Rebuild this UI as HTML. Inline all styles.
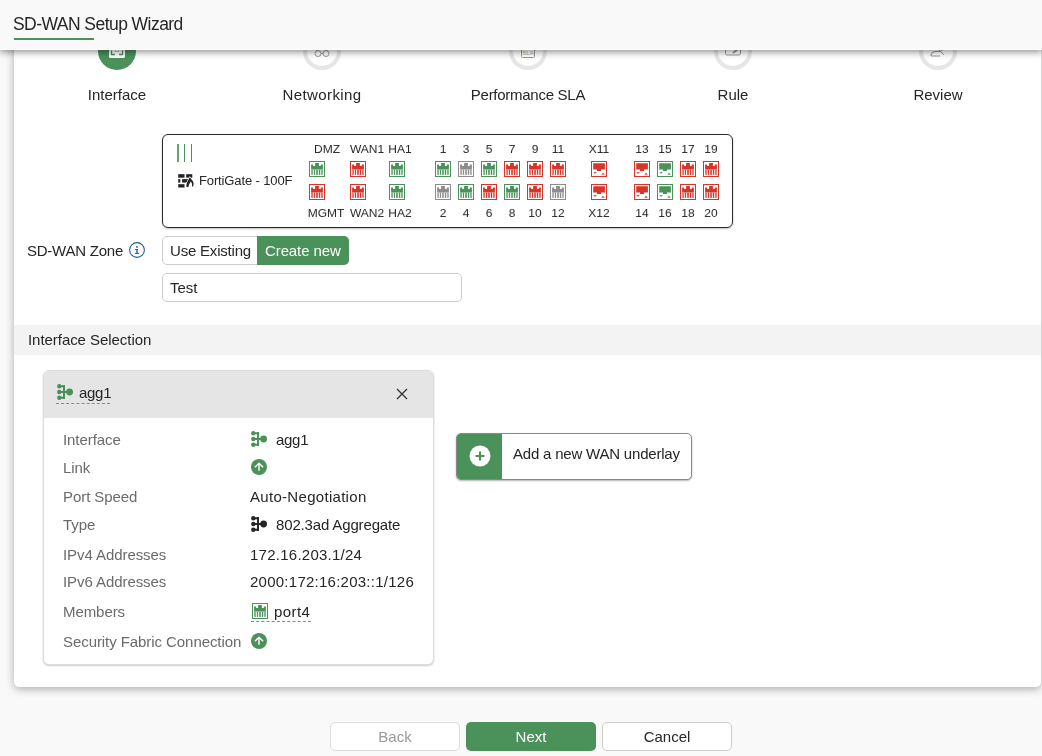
<!DOCTYPE html>
<html><head><meta charset="utf-8"><style>
html,body{margin:0;padding:0}
body{width:1042px;height:756px;overflow:hidden;position:relative;background:#f9f9f9;font-family:"Liberation Sans",sans-serif;color:#333}
.t{position:absolute;line-height:20px;white-space:nowrap;will-change:transform}
.p{position:absolute;display:block}
.abs{position:absolute}
</style></head><body>

<div class="abs" style="left:14px;top:-10px;width:1027px;height:697px;background:#fff;border-radius:5px;box-shadow:0 2px 8px rgba(0,0,0,0.32)"></div>
<div class="abs" style="left:98px;top:32px;width:38px;height:38px;border-radius:50%;background:#4a915a"></div>
<svg class="p" style="left:109px;top:42px" width="16" height="16" viewBox="0 0 16 16"><rect x="0" y="0" width="16" height="16" rx="1.5" fill="#fff"/><path d="M2.5 8.5V12.5H6M10 12.5H13.5V8.5" fill="none" stroke="#4a915a" stroke-width="1.3"/><path d="M6 9H7V10M9 10V9H10" stroke="#4a915a" stroke-width="1" fill="none" opacity="0.6"/></svg>
<div class="t" style="left:17px;width:200px;text-align:center;top:85px;font-size:15px;color:#262626;letter-spacing:0px">Interface</div>
<div class="abs" style="left:303px;top:32px;width:30px;height:30px;border-radius:50%;border:4px solid #e6e6e6"></div>
<svg class="p" style="left:314px;top:47px" width="16" height="12" viewBox="0 0 16 12"><g fill="none" stroke="#999" stroke-width="1"><circle cx="4" cy="6.5" r="3"/><circle cx="12" cy="6.5" r="3"/><path d="M7 6.5H9M2.5 3.8L3.5 1.5M13.5 3.8L12.5 1.5"/></g></svg>
<div class="t" style="left:222px;width:200px;text-align:center;top:85px;font-size:15px;color:#262626;letter-spacing:0.4px">Networking</div>
<div class="abs" style="left:509px;top:32px;width:30px;height:30px;border-radius:50%;border:4px solid #e6e6e6"></div>
<svg class="p" style="left:521px;top:44px" width="14" height="14" viewBox="0 0 14 14"><rect x="0.5" y="0.5" width="13" height="13" rx="1" fill="none" stroke="#9a9a9a"/><text x="7" y="11" font-size="6" text-anchor="middle" fill="#aaa" font-family="Liberation Sans">SLA</text></svg>
<div class="t" style="left:428px;width:200px;text-align:center;top:85px;font-size:15px;color:#262626;letter-spacing:-0.27px">Performance SLA</div>
<div class="abs" style="left:714px;top:32px;width:30px;height:30px;border-radius:50%;border:4px solid #e6e6e6"></div>
<svg class="p" style="left:725px;top:42px" width="16" height="14" viewBox="0 0 16 14"><rect x="0.5" y="0.5" width="15" height="12.5" rx="1.5" fill="none" stroke="#999"/><path d="M8 11L13 7" stroke="#999" stroke-width="2"/></svg>
<div class="t" style="left:633px;width:200px;text-align:center;top:85px;font-size:15px;color:#262626;letter-spacing:0px">Rule</div>
<div class="abs" style="left:919px;top:32px;width:30px;height:30px;border-radius:50%;border:4px solid #e6e6e6"></div>
<svg class="p" style="left:930px;top:44px" width="16" height="14" viewBox="0 0 16 14"><path d="M1 12C1 9 3 7.5 6 7.5H10M1 12H10" fill="none" stroke="#999" stroke-width="1.2"/><path d="M8 4L10 7L14 11M11 7.5L14 4" fill="none" stroke="#999" stroke-width="1"/></svg>
<div class="t" style="left:838px;width:200px;text-align:center;top:85px;font-size:15px;color:#262626;letter-spacing:0px">Review</div>
<div class="abs" style="left:0;top:0;width:1042px;height:49px;border-bottom:1px solid #fff;background:#f9f9f9;box-shadow:0 2px 7px rgba(0,0,0,0.45)"></div>
<div class="t" style="left:13px;top:14px;font-size:17.5px;color:#262626;letter-spacing:-0.55px;">SD-WAN Setup Wizard</div>
<div class="abs" style="left:14px;top:38px;width:80px;height:2px;background:#4a915a"></div>
<div class="abs" style="left:162px;top:134px;width:569px;height:92px;border:1px solid #2a2a2a;border-radius:6px;box-shadow:0 1px 2px rgba(0,0,0,0.25)"></div>
<div class="abs" style="left:177px;top:144px;width:2px;height:18px;background:#4a915a;opacity:0.85"></div>
<div class="abs" style="left:184px;top:144px;width:1.2px;height:18px;background:#4a915a"></div>
<div class="abs" style="left:190.9px;top:144px;width:1.2px;height:18px;background:#4a915a"></div>
<svg class="p" style="left:178px;top:174px" width="17" height="14" viewBox="0 0 17 14">
<g fill="#222"><rect x="0.2" y="0.2" width="6.3" height="3.5"/><rect x="8.2" y="0.2" width="6.1" height="3.5"/>
<rect x="0.2" y="5.1" width="2.1" height="3.5"/><rect x="4.1" y="5.1" width="6.4" height="3.5"/>
<rect x="0.2" y="10.2" width="6.3" height="3.3"/></g>
<path d="M8.4 13C8 10.5 9.8 6.5 11.8 3.3C13 5.2 15.8 7.2 15.6 10C15.5 11.3 15 12.2 14.5 12.7L13.9 12.3C14.5 10.8 13.8 9 12.7 7.6C11.6 9.5 10.6 11.5 10.4 13Z" fill="#222" stroke="#fff" stroke-width="1.4" paint-order="stroke"/>
</svg>
<div class="t" style="left:199px;top:171px;font-size:13px;color:#262626;letter-spacing:-0.13px;">FortiGate - 100F</div>
<div class="t" style="left:296.5px;width:60px;text-align:center;top:139px;font-size:12px;color:#262626;transform:scaleY(0.9);transform-origin:0 14px">DMZ</div>
<div class="t" style="left:336.5px;width:60px;text-align:center;top:139px;font-size:12px;color:#262626;transform:scaleY(0.9);transform-origin:0 14px">WAN1</div>
<div class="t" style="left:369.5px;width:60px;text-align:center;top:139px;font-size:12px;color:#262626;transform:scaleY(0.9);transform-origin:0 14px">HA1</div>
<div class="t" style="left:296px;width:60px;text-align:center;top:203px;font-size:12px;color:#262626;transform:scaleY(0.9);transform-origin:0 14px">MGMT</div>
<div class="t" style="left:336.5px;width:60px;text-align:center;top:203px;font-size:12px;color:#262626;transform:scaleY(0.9);transform-origin:0 14px">WAN2</div>
<div class="t" style="left:369.5px;width:60px;text-align:center;top:203px;font-size:12px;color:#262626;transform:scaleY(0.9);transform-origin:0 14px">HA2</div>
<svg class="p" style="left:309px;top:161px" width="16" height="16" viewBox="0 0 16 16"><rect x="0.5" y="0.5" width="15" height="15" fill="#fff" stroke="#4a915a"/><path d="M2.1 8.6V3.4H4.1V4.9H6.1V2.1H9.9V4.9H11.8V3.4H13.9V8.6Z" fill="#4a915a"/><g fill="#4a915a"><rect x="2.1" y="8.6" width="2" height="5.3" opacity="0.7"/><rect x="4.9" y="8.6" width="1.2" height="5.3"/><rect x="7" y="8.6" width="2.1" height="5.3" opacity="0.8"/><rect x="9.9" y="8.6" width="1.2" height="5.3"/><rect x="11.8" y="8.6" width="2.1" height="5.3" opacity="0.7"/></g></svg>
<svg class="p" style="left:350px;top:161px" width="16" height="16" viewBox="0 0 16 16"><rect x="0.5" y="0.5" width="15" height="15" fill="#fff" stroke="#d6352a"/><path d="M2.1 8.6V3.4H4.1V4.9H6.1V2.1H9.9V4.9H11.8V3.4H13.9V8.6Z" fill="#d6352a"/><g fill="#d6352a"><rect x="2.1" y="8.6" width="2" height="5.3" opacity="0.7"/><rect x="4.9" y="8.6" width="1.2" height="5.3"/><rect x="7" y="8.6" width="2.1" height="5.3" opacity="0.8"/><rect x="9.9" y="8.6" width="1.2" height="5.3"/><rect x="11.8" y="8.6" width="2.1" height="5.3" opacity="0.7"/></g></svg>
<svg class="p" style="left:389px;top:161px" width="16" height="16" viewBox="0 0 16 16"><rect x="0.5" y="0.5" width="15" height="15" fill="#fff" stroke="#4a915a"/><path d="M2.1 8.6V3.4H4.1V4.9H6.1V2.1H9.9V4.9H11.8V3.4H13.9V8.6Z" fill="#4a915a"/><g fill="#4a915a"><rect x="2.1" y="8.6" width="2" height="5.3" opacity="0.7"/><rect x="4.9" y="8.6" width="1.2" height="5.3"/><rect x="7" y="8.6" width="2.1" height="5.3" opacity="0.8"/><rect x="9.9" y="8.6" width="1.2" height="5.3"/><rect x="11.8" y="8.6" width="2.1" height="5.3" opacity="0.7"/></g></svg>
<svg class="p" style="left:309px;top:184px" width="16" height="16" viewBox="0 0 16 16"><rect x="0.5" y="0.5" width="15" height="15" fill="#fff" stroke="#d6352a"/><path d="M2.1 8.6V3.4H4.1V4.9H6.1V2.1H9.9V4.9H11.8V3.4H13.9V8.6Z" fill="#d6352a"/><g fill="#d6352a"><rect x="2.1" y="8.6" width="2" height="5.3" opacity="0.7"/><rect x="4.9" y="8.6" width="1.2" height="5.3"/><rect x="7" y="8.6" width="2.1" height="5.3" opacity="0.8"/><rect x="9.9" y="8.6" width="1.2" height="5.3"/><rect x="11.8" y="8.6" width="2.1" height="5.3" opacity="0.7"/></g></svg>
<svg class="p" style="left:350px;top:184px" width="16" height="16" viewBox="0 0 16 16"><rect x="0.5" y="0.5" width="15" height="15" fill="#fff" stroke="#d6352a"/><path d="M2.1 8.6V3.4H4.1V4.9H6.1V2.1H9.9V4.9H11.8V3.4H13.9V8.6Z" fill="#d6352a"/><g fill="#d6352a"><rect x="2.1" y="8.6" width="2" height="5.3" opacity="0.7"/><rect x="4.9" y="8.6" width="1.2" height="5.3"/><rect x="7" y="8.6" width="2.1" height="5.3" opacity="0.8"/><rect x="9.9" y="8.6" width="1.2" height="5.3"/><rect x="11.8" y="8.6" width="2.1" height="5.3" opacity="0.7"/></g></svg>
<svg class="p" style="left:389px;top:184px" width="16" height="16" viewBox="0 0 16 16"><rect x="0.5" y="0.5" width="15" height="15" fill="#fff" stroke="#4a915a"/><path d="M2.1 8.6V3.4H4.1V4.9H6.1V2.1H9.9V4.9H11.8V3.4H13.9V8.6Z" fill="#4a915a"/><g fill="#4a915a"><rect x="2.1" y="8.6" width="2" height="5.3" opacity="0.7"/><rect x="4.9" y="8.6" width="1.2" height="5.3"/><rect x="7" y="8.6" width="2.1" height="5.3" opacity="0.8"/><rect x="9.9" y="8.6" width="1.2" height="5.3"/><rect x="11.8" y="8.6" width="2.1" height="5.3" opacity="0.7"/></g></svg>
<svg class="p" style="left:435px;top:161px" width="16" height="16" viewBox="0 0 16 16"><rect x="0.5" y="0.5" width="15" height="15" fill="#fff" stroke="#4a915a"/><path d="M2.1 8.6V3.4H4.1V4.9H6.1V2.1H9.9V4.9H11.8V3.4H13.9V8.6Z" fill="#4a915a"/><g fill="#4a915a"><rect x="2.1" y="8.6" width="2" height="5.3" opacity="0.7"/><rect x="4.9" y="8.6" width="1.2" height="5.3"/><rect x="7" y="8.6" width="2.1" height="5.3" opacity="0.8"/><rect x="9.9" y="8.6" width="1.2" height="5.3"/><rect x="11.8" y="8.6" width="2.1" height="5.3" opacity="0.7"/></g></svg>
<svg class="p" style="left:435px;top:184px" width="16" height="16" viewBox="0 0 16 16"><rect x="0.5" y="0.5" width="15" height="15" fill="#fff" stroke="#8c8c8c"/><path d="M2.1 8.6V3.4H4.1V4.9H6.1V2.1H9.9V4.9H11.8V3.4H13.9V8.6Z" fill="#8c8c8c"/><g fill="#8c8c8c"><rect x="2.1" y="8.6" width="2" height="5.3" opacity="0.7"/><rect x="4.9" y="8.6" width="1.2" height="5.3"/><rect x="7" y="8.6" width="2.1" height="5.3" opacity="0.8"/><rect x="9.9" y="8.6" width="1.2" height="5.3"/><rect x="11.8" y="8.6" width="2.1" height="5.3" opacity="0.7"/></g></svg>
<div class="t" style="left:413px;width:60px;text-align:center;top:139px;font-size:12px;color:#262626;transform:scaleY(0.9);transform-origin:0 14px">1</div>
<div class="t" style="left:413px;width:60px;text-align:center;top:203px;font-size:12px;color:#262626;transform:scaleY(0.9);transform-origin:0 14px">2</div>
<svg class="p" style="left:458px;top:161px" width="16" height="16" viewBox="0 0 16 16"><rect x="0.5" y="0.5" width="15" height="15" fill="#fff" stroke="#8c8c8c"/><path d="M2.1 8.6V3.4H4.1V4.9H6.1V2.1H9.9V4.9H11.8V3.4H13.9V8.6Z" fill="#8c8c8c"/><g fill="#8c8c8c"><rect x="2.1" y="8.6" width="2" height="5.3" opacity="0.7"/><rect x="4.9" y="8.6" width="1.2" height="5.3"/><rect x="7" y="8.6" width="2.1" height="5.3" opacity="0.8"/><rect x="9.9" y="8.6" width="1.2" height="5.3"/><rect x="11.8" y="8.6" width="2.1" height="5.3" opacity="0.7"/></g></svg>
<svg class="p" style="left:458px;top:184px" width="16" height="16" viewBox="0 0 16 16"><rect x="0.5" y="0.5" width="15" height="15" fill="#fff" stroke="#4a915a"/><path d="M2.1 8.6V3.4H4.1V4.9H6.1V2.1H9.9V4.9H11.8V3.4H13.9V8.6Z" fill="#4a915a"/><g fill="#4a915a"><rect x="2.1" y="8.6" width="2" height="5.3" opacity="0.7"/><rect x="4.9" y="8.6" width="1.2" height="5.3"/><rect x="7" y="8.6" width="2.1" height="5.3" opacity="0.8"/><rect x="9.9" y="8.6" width="1.2" height="5.3"/><rect x="11.8" y="8.6" width="2.1" height="5.3" opacity="0.7"/></g></svg>
<div class="t" style="left:436px;width:60px;text-align:center;top:139px;font-size:12px;color:#262626;transform:scaleY(0.9);transform-origin:0 14px">3</div>
<div class="t" style="left:436px;width:60px;text-align:center;top:203px;font-size:12px;color:#262626;transform:scaleY(0.9);transform-origin:0 14px">4</div>
<svg class="p" style="left:481px;top:161px" width="16" height="16" viewBox="0 0 16 16"><rect x="0.5" y="0.5" width="15" height="15" fill="#fff" stroke="#4a915a"/><path d="M2.1 8.6V3.4H4.1V4.9H6.1V2.1H9.9V4.9H11.8V3.4H13.9V8.6Z" fill="#4a915a"/><g fill="#4a915a"><rect x="2.1" y="8.6" width="2" height="5.3" opacity="0.7"/><rect x="4.9" y="8.6" width="1.2" height="5.3"/><rect x="7" y="8.6" width="2.1" height="5.3" opacity="0.8"/><rect x="9.9" y="8.6" width="1.2" height="5.3"/><rect x="11.8" y="8.6" width="2.1" height="5.3" opacity="0.7"/></g></svg>
<svg class="p" style="left:481px;top:184px" width="16" height="16" viewBox="0 0 16 16"><rect x="0.5" y="0.5" width="15" height="15" fill="#fff" stroke="#d6352a"/><path d="M2.1 8.6V3.4H4.1V4.9H6.1V2.1H9.9V4.9H11.8V3.4H13.9V8.6Z" fill="#d6352a"/><g fill="#d6352a"><rect x="2.1" y="8.6" width="2" height="5.3" opacity="0.7"/><rect x="4.9" y="8.6" width="1.2" height="5.3"/><rect x="7" y="8.6" width="2.1" height="5.3" opacity="0.8"/><rect x="9.9" y="8.6" width="1.2" height="5.3"/><rect x="11.8" y="8.6" width="2.1" height="5.3" opacity="0.7"/></g></svg>
<div class="t" style="left:459px;width:60px;text-align:center;top:139px;font-size:12px;color:#262626;transform:scaleY(0.9);transform-origin:0 14px">5</div>
<div class="t" style="left:459px;width:60px;text-align:center;top:203px;font-size:12px;color:#262626;transform:scaleY(0.9);transform-origin:0 14px">6</div>
<svg class="p" style="left:504px;top:161px" width="16" height="16" viewBox="0 0 16 16"><rect x="0.5" y="0.5" width="15" height="15" fill="#fff" stroke="#d6352a"/><path d="M2.1 8.6V3.4H4.1V4.9H6.1V2.1H9.9V4.9H11.8V3.4H13.9V8.6Z" fill="#d6352a"/><g fill="#d6352a"><rect x="2.1" y="8.6" width="2" height="5.3" opacity="0.7"/><rect x="4.9" y="8.6" width="1.2" height="5.3"/><rect x="7" y="8.6" width="2.1" height="5.3" opacity="0.8"/><rect x="9.9" y="8.6" width="1.2" height="5.3"/><rect x="11.8" y="8.6" width="2.1" height="5.3" opacity="0.7"/></g></svg>
<svg class="p" style="left:504px;top:184px" width="16" height="16" viewBox="0 0 16 16"><rect x="0.5" y="0.5" width="15" height="15" fill="#fff" stroke="#4a915a"/><path d="M2.1 8.6V3.4H4.1V4.9H6.1V2.1H9.9V4.9H11.8V3.4H13.9V8.6Z" fill="#4a915a"/><g fill="#4a915a"><rect x="2.1" y="8.6" width="2" height="5.3" opacity="0.7"/><rect x="4.9" y="8.6" width="1.2" height="5.3"/><rect x="7" y="8.6" width="2.1" height="5.3" opacity="0.8"/><rect x="9.9" y="8.6" width="1.2" height="5.3"/><rect x="11.8" y="8.6" width="2.1" height="5.3" opacity="0.7"/></g></svg>
<div class="t" style="left:482px;width:60px;text-align:center;top:139px;font-size:12px;color:#262626;transform:scaleY(0.9);transform-origin:0 14px">7</div>
<div class="t" style="left:482px;width:60px;text-align:center;top:203px;font-size:12px;color:#262626;transform:scaleY(0.9);transform-origin:0 14px">8</div>
<svg class="p" style="left:527px;top:161px" width="16" height="16" viewBox="0 0 16 16"><rect x="0.5" y="0.5" width="15" height="15" fill="#fff" stroke="#d6352a"/><path d="M2.1 8.6V3.4H4.1V4.9H6.1V2.1H9.9V4.9H11.8V3.4H13.9V8.6Z" fill="#d6352a"/><g fill="#d6352a"><rect x="2.1" y="8.6" width="2" height="5.3" opacity="0.7"/><rect x="4.9" y="8.6" width="1.2" height="5.3"/><rect x="7" y="8.6" width="2.1" height="5.3" opacity="0.8"/><rect x="9.9" y="8.6" width="1.2" height="5.3"/><rect x="11.8" y="8.6" width="2.1" height="5.3" opacity="0.7"/></g></svg>
<svg class="p" style="left:527px;top:184px" width="16" height="16" viewBox="0 0 16 16"><rect x="0.5" y="0.5" width="15" height="15" fill="#fff" stroke="#d6352a"/><path d="M2.1 8.6V3.4H4.1V4.9H6.1V2.1H9.9V4.9H11.8V3.4H13.9V8.6Z" fill="#d6352a"/><g fill="#d6352a"><rect x="2.1" y="8.6" width="2" height="5.3" opacity="0.7"/><rect x="4.9" y="8.6" width="1.2" height="5.3"/><rect x="7" y="8.6" width="2.1" height="5.3" opacity="0.8"/><rect x="9.9" y="8.6" width="1.2" height="5.3"/><rect x="11.8" y="8.6" width="2.1" height="5.3" opacity="0.7"/></g></svg>
<div class="t" style="left:505px;width:60px;text-align:center;top:139px;font-size:12px;color:#262626;transform:scaleY(0.9);transform-origin:0 14px">9</div>
<div class="t" style="left:505px;width:60px;text-align:center;top:203px;font-size:12px;color:#262626;transform:scaleY(0.9);transform-origin:0 14px">10</div>
<svg class="p" style="left:550px;top:161px" width="16" height="16" viewBox="0 0 16 16"><rect x="0.5" y="0.5" width="15" height="15" fill="#fff" stroke="#d6352a"/><path d="M2.1 8.6V3.4H4.1V4.9H6.1V2.1H9.9V4.9H11.8V3.4H13.9V8.6Z" fill="#d6352a"/><g fill="#d6352a"><rect x="2.1" y="8.6" width="2" height="5.3" opacity="0.7"/><rect x="4.9" y="8.6" width="1.2" height="5.3"/><rect x="7" y="8.6" width="2.1" height="5.3" opacity="0.8"/><rect x="9.9" y="8.6" width="1.2" height="5.3"/><rect x="11.8" y="8.6" width="2.1" height="5.3" opacity="0.7"/></g></svg>
<svg class="p" style="left:550px;top:184px" width="16" height="16" viewBox="0 0 16 16"><rect x="0.5" y="0.5" width="15" height="15" fill="#fff" stroke="#8c8c8c"/><path d="M2.1 8.6V3.4H4.1V4.9H6.1V2.1H9.9V4.9H11.8V3.4H13.9V8.6Z" fill="#8c8c8c"/><g fill="#8c8c8c"><rect x="2.1" y="8.6" width="2" height="5.3" opacity="0.7"/><rect x="4.9" y="8.6" width="1.2" height="5.3"/><rect x="7" y="8.6" width="2.1" height="5.3" opacity="0.8"/><rect x="9.9" y="8.6" width="1.2" height="5.3"/><rect x="11.8" y="8.6" width="2.1" height="5.3" opacity="0.7"/></g></svg>
<div class="t" style="left:528px;width:60px;text-align:center;top:139px;font-size:12px;color:#262626;transform:scaleY(0.9);transform-origin:0 14px">11</div>
<div class="t" style="left:528px;width:60px;text-align:center;top:203px;font-size:12px;color:#262626;transform:scaleY(0.9);transform-origin:0 14px">12</div>
<svg class="p" style="left:591px;top:161px" width="16" height="16" viewBox="0 0 16 16"><rect x="0.5" y="0.5" width="15" height="15" fill="#fff" stroke="#d6352a"/><path d="M2.2 2.2H13.9V8.6H10V9.9H6V8.6H2.2Z" fill="#d6352a"/><path d="M2.2 11H5.8L4 12.9Z" fill="#d6352a" opacity="0.85"/><path d="M10.2 13.8H13.9L12 11.6Z" fill="#d6352a" opacity="0.85"/></svg>
<svg class="p" style="left:591px;top:184px" width="16" height="16" viewBox="0 0 16 16"><rect x="0.5" y="0.5" width="15" height="15" fill="#fff" stroke="#d6352a"/><path d="M2.2 2.2H13.9V8.6H10V9.9H6V8.6H2.2Z" fill="#d6352a"/><path d="M2.2 11H5.8L4 12.9Z" fill="#d6352a" opacity="0.85"/><path d="M10.2 13.8H13.9L12 11.6Z" fill="#d6352a" opacity="0.85"/></svg>
<div class="t" style="left:569px;width:60px;text-align:center;top:139px;font-size:12px;color:#262626;transform:scaleY(0.9);transform-origin:0 14px">X11</div>
<div class="t" style="left:569px;width:60px;text-align:center;top:203px;font-size:12px;color:#262626;transform:scaleY(0.9);transform-origin:0 14px">X12</div>
<svg class="p" style="left:634px;top:161px" width="16" height="16" viewBox="0 0 16 16"><rect x="0.5" y="0.5" width="15" height="15" fill="#fff" stroke="#d6352a"/><path d="M2.2 2.2H13.9V8.6H10V9.9H6V8.6H2.2Z" fill="#d6352a"/><path d="M2.2 11H5.8L4 12.9Z" fill="#d6352a" opacity="0.85"/><path d="M10.2 13.8H13.9L12 11.6Z" fill="#d6352a" opacity="0.85"/></svg>
<svg class="p" style="left:634px;top:184px" width="16" height="16" viewBox="0 0 16 16"><rect x="0.5" y="0.5" width="15" height="15" fill="#fff" stroke="#d6352a"/><path d="M2.2 2.2H13.9V8.6H10V9.9H6V8.6H2.2Z" fill="#d6352a"/><path d="M2.2 11H5.8L4 12.9Z" fill="#d6352a" opacity="0.85"/><path d="M10.2 13.8H13.9L12 11.6Z" fill="#d6352a" opacity="0.85"/></svg>
<svg class="p" style="left:657px;top:161px" width="16" height="16" viewBox="0 0 16 16"><rect x="0.5" y="0.5" width="15" height="15" fill="#fff" stroke="#4a915a"/><path d="M2.2 2.2H13.9V8.6H10V9.9H6V8.6H2.2Z" fill="#4a915a"/><path d="M2.2 11H5.8L4 12.9Z" fill="#4a915a" opacity="0.85"/><path d="M10.2 13.8H13.9L12 11.6Z" fill="#4a915a" opacity="0.85"/></svg>
<svg class="p" style="left:657px;top:184px" width="16" height="16" viewBox="0 0 16 16"><rect x="0.5" y="0.5" width="15" height="15" fill="#fff" stroke="#4a915a"/><path d="M2.2 2.2H13.9V8.6H10V9.9H6V8.6H2.2Z" fill="#4a915a"/><path d="M2.2 11H5.8L4 12.9Z" fill="#4a915a" opacity="0.85"/><path d="M10.2 13.8H13.9L12 11.6Z" fill="#4a915a" opacity="0.85"/></svg>
<svg class="p" style="left:680px;top:161px" width="16" height="16" viewBox="0 0 16 16"><rect x="0.5" y="0.5" width="15" height="15" fill="#fff" stroke="#d6352a"/><path d="M2.1 8.6V3.4H4.1V4.9H6.1V2.1H9.9V4.9H11.8V3.4H13.9V8.6Z" fill="#d6352a"/><g fill="#d6352a"><rect x="2.1" y="8.6" width="2" height="5.3" opacity="0.7"/><rect x="4.9" y="8.6" width="1.2" height="5.3"/><rect x="7" y="8.6" width="2.1" height="5.3" opacity="0.8"/><rect x="9.9" y="8.6" width="1.2" height="5.3"/><rect x="11.8" y="8.6" width="2.1" height="5.3" opacity="0.7"/></g></svg>
<svg class="p" style="left:680px;top:184px" width="16" height="16" viewBox="0 0 16 16"><rect x="0.5" y="0.5" width="15" height="15" fill="#fff" stroke="#d6352a"/><path d="M2.1 8.6V3.4H4.1V4.9H6.1V2.1H9.9V4.9H11.8V3.4H13.9V8.6Z" fill="#d6352a"/><g fill="#d6352a"><rect x="2.1" y="8.6" width="2" height="5.3" opacity="0.7"/><rect x="4.9" y="8.6" width="1.2" height="5.3"/><rect x="7" y="8.6" width="2.1" height="5.3" opacity="0.8"/><rect x="9.9" y="8.6" width="1.2" height="5.3"/><rect x="11.8" y="8.6" width="2.1" height="5.3" opacity="0.7"/></g></svg>
<svg class="p" style="left:703px;top:161px" width="16" height="16" viewBox="0 0 16 16"><rect x="0.5" y="0.5" width="15" height="15" fill="#fff" stroke="#d6352a"/><path d="M2.1 8.6V3.4H4.1V4.9H6.1V2.1H9.9V4.9H11.8V3.4H13.9V8.6Z" fill="#d6352a"/><g fill="#d6352a"><rect x="2.1" y="8.6" width="2" height="5.3" opacity="0.7"/><rect x="4.9" y="8.6" width="1.2" height="5.3"/><rect x="7" y="8.6" width="2.1" height="5.3" opacity="0.8"/><rect x="9.9" y="8.6" width="1.2" height="5.3"/><rect x="11.8" y="8.6" width="2.1" height="5.3" opacity="0.7"/></g></svg>
<svg class="p" style="left:703px;top:184px" width="16" height="16" viewBox="0 0 16 16"><rect x="0.5" y="0.5" width="15" height="15" fill="#fff" stroke="#d6352a"/><path d="M2.1 8.6V3.4H4.1V4.9H6.1V2.1H9.9V4.9H11.8V3.4H13.9V8.6Z" fill="#d6352a"/><g fill="#d6352a"><rect x="2.1" y="8.6" width="2" height="5.3" opacity="0.7"/><rect x="4.9" y="8.6" width="1.2" height="5.3"/><rect x="7" y="8.6" width="2.1" height="5.3" opacity="0.8"/><rect x="9.9" y="8.6" width="1.2" height="5.3"/><rect x="11.8" y="8.6" width="2.1" height="5.3" opacity="0.7"/></g></svg>
<div class="t" style="left:612px;width:60px;text-align:center;top:139px;font-size:12px;color:#262626;transform:scaleY(0.9);transform-origin:0 14px">13</div>
<div class="t" style="left:612px;width:60px;text-align:center;top:203px;font-size:12px;color:#262626;transform:scaleY(0.9);transform-origin:0 14px">14</div>
<div class="t" style="left:635px;width:60px;text-align:center;top:139px;font-size:12px;color:#262626;transform:scaleY(0.9);transform-origin:0 14px">15</div>
<div class="t" style="left:635px;width:60px;text-align:center;top:203px;font-size:12px;color:#262626;transform:scaleY(0.9);transform-origin:0 14px">16</div>
<div class="t" style="left:658px;width:60px;text-align:center;top:139px;font-size:12px;color:#262626;transform:scaleY(0.9);transform-origin:0 14px">17</div>
<div class="t" style="left:658px;width:60px;text-align:center;top:203px;font-size:12px;color:#262626;transform:scaleY(0.9);transform-origin:0 14px">18</div>
<div class="t" style="left:681px;width:60px;text-align:center;top:139px;font-size:12px;color:#262626;transform:scaleY(0.9);transform-origin:0 14px">19</div>
<div class="t" style="left:681px;width:60px;text-align:center;top:203px;font-size:12px;color:#262626;transform:scaleY(0.9);transform-origin:0 14px">20</div>
<div class="t" style="left:27px;top:241px;font-size:15px;color:#262626;letter-spacing:-0.24px;">SD-WAN Zone</div>
<svg class="p" style="left:129px;top:242px" width="16" height="16" viewBox="0 0 16 16">
<circle cx="8" cy="8" r="7.4" fill="none" stroke="#1d5e9a" stroke-width="1.1"/><g fill="#1d5e9a"><rect x="7" y="4.1" width="2" height="1.6" opacity="0.8"/><rect x="6" y="7.1" width="3" height="0.9"/><rect x="7.1" y="7.1" width="1.9" height="4.2" opacity="0.75"/><rect x="5.8" y="10.9" width="4.3" height="1"/></g>
</svg>
<div class="abs" style="left:162px;top:236px;width:185px;height:27px;border:1px solid #ccc;border-radius:5px;background:#fff"></div>
<div class="abs" style="left:257px;top:236px;width:92px;height:29px;border-radius:0 5px 5px 0;background:#4a915a"></div>
<div class="t" style="left:170px;top:241px;font-size:15px;color:#262626;letter-spacing:-0.2px;">Use Existing</div>
<div class="t" style="left:265px;top:241px;font-size:15px;color:#fff;letter-spacing:-0.1px;">Create new</div>
<div class="abs" style="left:162px;top:273px;width:298px;height:27px;border:1px solid #ccc;border-radius:5px;background:#fff"></div>
<div class="t" style="left:170px;top:278px;font-size:15px;color:#262626;letter-spacing:0px;">Test</div>
<div class="abs" style="left:14px;top:325px;width:1027px;height:30px;background:#f3f3f3"></div>
<div class="t" style="left:28px;top:330px;font-size:15px;color:#262626;letter-spacing:-0.05px;">Interface Selection</div>
<div class="abs" style="left:43px;top:370px;width:389px;height:293px;border:1px solid #dcdcdc;border-radius:6px;background:#fff;box-shadow:0 1px 2px rgba(0,0,0,0.2);overflow:hidden"><div style="position:absolute;left:0;top:0;width:389px;height:47px;background:#e5e5e5"></div></div>
<svg class="p" style="left:57px;top:384px" width="16" height="16" viewBox="0 0 16 16"><g fill="#4a915a"><circle cx="2.3" cy="2.3" r="2.2"/><circle cx="2.3" cy="8" r="2.2"/><circle cx="2.3" cy="13.7" r="2.2"/><rect x="6" y="1" width="2" height="14"/><rect x="2" y="1.3" width="5" height="2"/><rect x="2" y="7" width="10" height="2"/><rect x="2" y="12.7" width="5" height="2"/><circle cx="12.6" cy="8" r="3.4"/></g></svg>
<div class="t" style="left:79px;top:383px;font-size:15px;color:#262626;letter-spacing:-0.3px;">agg1</div>
<div class="abs" style="left:56px;top:403px;width:54px;border-top:1px dashed #888"></div>
<svg class="p" style="left:396px;top:388px" width="12" height="12" viewBox="0 0 12 12"><path d="M1 1L11 11M11 1L1 11" stroke="#333" stroke-width="1.3"/></svg>
<div class="t" style="left:63px;top:430px;font-size:15px;color:#6b6b6b;letter-spacing:-0.07px;">Interface</div>
<div class="t" style="left:63px;top:458px;font-size:15px;color:#6b6b6b;letter-spacing:-0.07px;">Link</div>
<div class="t" style="left:63px;top:487px;font-size:15px;color:#6b6b6b;letter-spacing:-0.07px;">Port Speed</div>
<div class="t" style="left:63px;top:515px;font-size:15px;color:#6b6b6b;letter-spacing:-0.07px;">Type</div>
<div class="t" style="left:63px;top:545px;font-size:15px;color:#6b6b6b;letter-spacing:-0.07px;">IPv4 Addresses</div>
<div class="t" style="left:63px;top:572px;font-size:15px;color:#6b6b6b;letter-spacing:-0.07px;">IPv6 Addresses</div>
<div class="t" style="left:63px;top:602px;font-size:15px;color:#6b6b6b;letter-spacing:-0.07px;">Members</div>
<div class="t" style="left:63px;top:632px;font-size:15px;color:#6b6b6b;letter-spacing:-0.07px;">Security Fabric Connection</div>
<svg class="p" style="left:251px;top:431px" width="16" height="16" viewBox="0 0 16 16"><g fill="#4a915a"><circle cx="2.3" cy="2.3" r="2.2"/><circle cx="2.3" cy="8" r="2.2"/><circle cx="2.3" cy="13.7" r="2.2"/><rect x="6" y="1" width="2" height="14"/><rect x="2" y="1.3" width="5" height="2"/><rect x="2" y="7" width="10" height="2"/><rect x="2" y="12.7" width="5" height="2"/><circle cx="12.6" cy="8" r="3.4"/></g></svg>
<div class="t" style="left:276px;top:430px;font-size:15px;color:#262626;letter-spacing:-0.3px;">agg1</div>
<svg class="p" style="left:251px;top:459px" width="16" height="16" viewBox="0 0 16 16"><circle cx="8" cy="8" r="8" fill="#4a915a"/><path d="M8 11.8V4.3M3.9 8.3L8 4.2L12.1 8.3" fill="none" stroke="#fff" stroke-width="1.4"/></svg>
<div class="t" style="left:250px;top:487px;font-size:15px;color:#262626;letter-spacing:0.3px;">Auto-Negotiation</div>
<svg class="p" style="left:251px;top:516px" width="16" height="16" viewBox="0 0 16 16"><g fill="#262626"><circle cx="2.3" cy="2.3" r="2.2"/><circle cx="2.3" cy="8" r="2.2"/><circle cx="2.3" cy="13.7" r="2.2"/><rect x="6" y="1" width="2" height="14"/><rect x="2" y="1.3" width="5" height="2"/><rect x="2" y="7" width="10" height="2"/><rect x="2" y="12.7" width="5" height="2"/><circle cx="12.6" cy="8" r="3.4"/></g></svg>
<div class="t" style="left:276px;top:515px;font-size:15px;color:#262626;letter-spacing:-0.15px;">802.3ad Aggregate</div>
<div class="t" style="left:250px;top:545px;font-size:15px;color:#262626;letter-spacing:0.25px;">172.16.203.1/24</div>
<div class="t" style="left:250px;top:572px;font-size:15px;color:#262626;letter-spacing:0.25px;">2000:172:16:203::1/126</div>
<svg class="p" style="left:252px;top:603px" width="16" height="16" viewBox="0 0 16 16"><rect x="0.5" y="0.5" width="15" height="15" fill="#fff" stroke="#4a915a"/><path d="M2.1 8.6V3.4H4.1V4.9H6.1V2.1H9.9V4.9H11.8V3.4H13.9V8.6Z" fill="#4a915a"/><g fill="#4a915a"><rect x="2.1" y="8.6" width="2" height="5.3" opacity="0.7"/><rect x="4.9" y="8.6" width="1.2" height="5.3"/><rect x="7" y="8.6" width="2.1" height="5.3" opacity="0.8"/><rect x="9.9" y="8.6" width="1.2" height="5.3"/><rect x="11.8" y="8.6" width="2.1" height="5.3" opacity="0.7"/></g></svg>
<div class="t" style="left:274px;top:602px;font-size:15px;color:#262626;letter-spacing:0.4px;">port4</div>
<div class="abs" style="left:251px;top:621px;width:60px;border-top:1px dashed #888"></div>
<svg class="p" style="left:251px;top:633px" width="16" height="16" viewBox="0 0 16 16"><circle cx="8" cy="8" r="8" fill="#4a915a"/><path d="M8 11.8V4.3M3.9 8.3L8 4.2L12.1 8.3" fill="none" stroke="#fff" stroke-width="1.4"/></svg>
<div class="abs" style="left:456px;top:433px;width:234px;height:45px;border:1px solid #888;border-radius:5px;background:#fff;box-shadow:0 1px 2px rgba(0,0,0,0.3);overflow:hidden"><div style="position:absolute;left:0;top:0;width:45px;height:45px;background:#4a915a"></div></div>
<svg class="p" style="left:469px;top:445px" width="22" height="22" viewBox="0 0 22 22"><circle cx="11" cy="11" r="10.5" fill="#fff"/><path d="M6.5 11H15.5M11 6.5V15.5" stroke="#4a915a" stroke-width="2"/></svg>
<div class="t" style="left:513px;top:444px;font-size:15px;color:#262626;letter-spacing:-0.2px;">Add a new WAN underlay</div>
<div class="abs" style="left:330px;top:722px;width:128px;height:27px;border:1px solid #ddd;border-radius:5px;background:#fff"></div>
<div class="t" style="left:330px;top:727px;font-size:15px;color:#999;letter-spacing:0px;width:130px;text-align:center">Back</div>
<div class="abs" style="left:466px;top:722px;width:130px;height:29px;border-radius:5px;background:#4a915a"></div>
<div class="t" style="left:466px;top:727px;font-size:15px;color:#fff;letter-spacing:0px;width:130px;text-align:center">Next</div>
<div class="abs" style="left:602px;top:722px;width:128px;height:27px;border:1px solid #ccc;border-radius:5px;background:#fff"></div>
<div class="t" style="left:602px;top:727px;font-size:15px;color:#262626;letter-spacing:0px;width:130px;text-align:center">Cancel</div>
</body></html>
